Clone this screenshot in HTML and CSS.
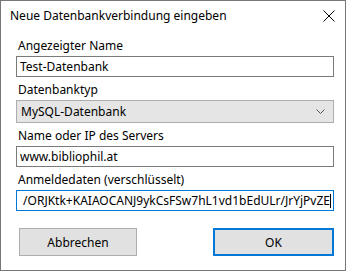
FILE: index.html
```html
<!DOCTYPE html>
<html lang="de">
<head>
    <meta charset="UTF-8">
    <title>Neue Datenbankverbindung eingeben</title>
    <link rel="stylesheet" href="styles.css">
</head>
<body>

    <div class="dialog">
        <!-- Title bar -->
        <div class="titlebar">
            <span class="title">Neue Datenbankverbindung eingeben</span>
            <svg class="close" width="12" height="12" viewBox="0 0 12 12">
                <path d="M0.5 0.5 L11.5 11.5 M11.5 0.5 L0.5 11.5" stroke="#000" stroke-width="1" fill="none"/>
            </svg>
        </div>

        <!-- Fields -->
        <div class="content">
            <div class="field">
                <label>Angezeigter Name</label>
                <div class="textbox">Test-Datenbank</div>
            </div>
            <div class="field">
                <label>Datenbanktyp</label>
                <div class="combo">
                    <span>MySQL-Datenbank</span>
                    <svg width="9" height="5" viewBox="0 0 9 5">
                        <path d="M0.5 0.5 L4.5 4.5 L8.5 0.5" stroke="#555" stroke-width="1" fill="none"/>
                    </svg>
                </div>
            </div>
            <div class="field">
                <label>Name oder IP des Servers</label>
                <div class="textbox">www.bibliophil.at</div>
            </div>
            <div class="field">
                <label>Anmeldedaten (verschlüsselt)</label>
                <div class="textbox focused">
                    <span class="scrolled">/ORJKtk+KAIAOCANJ9ykCsFSw7hL1vd1bEdULr/JrYjPvZE</span><span class="caret"></span>
                </div>
            </div>

            <div class="buttons">
                <div class="button">Abbrechen</div>
                <div class="button default">OK</div>
            </div>
        </div>
    </div>

</body>
</html>
```

FILE: styles.css
```css
/* General */
body {
    margin: 0;
    padding: 0;
    background: #ffffff;
    font-family: 'Noto Sans', sans-serif;
    font-size: 12px;
    color: #000;
}

.dialog {
    width: 346px;
    height: 271px;
    box-sizing: border-box;
    border: 1px solid #777;
    background: #fff;
}

/* Title bar */
.titlebar {
    height: 29px;
    display: flex;
    align-items: center;
    justify-content: space-between;
    padding: 0 10px 0 9px;
}

.title {
    line-height: 16px;
}

.close {
    margin-right: 0;
}

/* Fields */
.content {
    padding: 8px 11px 0 15px;
}

.field {
    display: flex;
    flex-direction: column;
    margin-bottom: 5px;
}

.field label {
    line-height: 16px;
    padding-left: 2px;
    margin-bottom: 2px;
}

.textbox {
    height: 21px;
    box-sizing: border-box;
    border: 1px solid #7a7a7a;
    padding: 0 3px;
    line-height: 19px;
    white-space: nowrap;
    overflow: hidden;
}

.textbox.focused {
    border-color: #0078d7;
    display: flex;
    justify-content: flex-end;
    align-items: center;
    padding: 0 2px 0 0;
}

.caret {
    display: inline-block;
    width: 1px;
    height: 14px;
    background: #000;
    flex-shrink: 0;
}

.combo {
    height: 23px;
    box-sizing: border-box;
    border: 1px solid #adadad;
    background: #e5e5e5;
    display: flex;
    align-items: center;
    justify-content: space-between;
    padding: 0 8px 0 4px;
}

/* Buttons */
.buttons {
    display: flex;
    justify-content: space-between;
    margin-top: 17px;
    padding-left: 3px;
}

.button {
    width: 118px;
    height: 28px;
    box-sizing: border-box;
    border: 1px solid #adadad;
    background: #e1e1e1;
    display: flex;
    align-items: center;
    justify-content: center;
}

.button.default {
    width: 121px;
    border: 2px solid #0078d7;
}
```
